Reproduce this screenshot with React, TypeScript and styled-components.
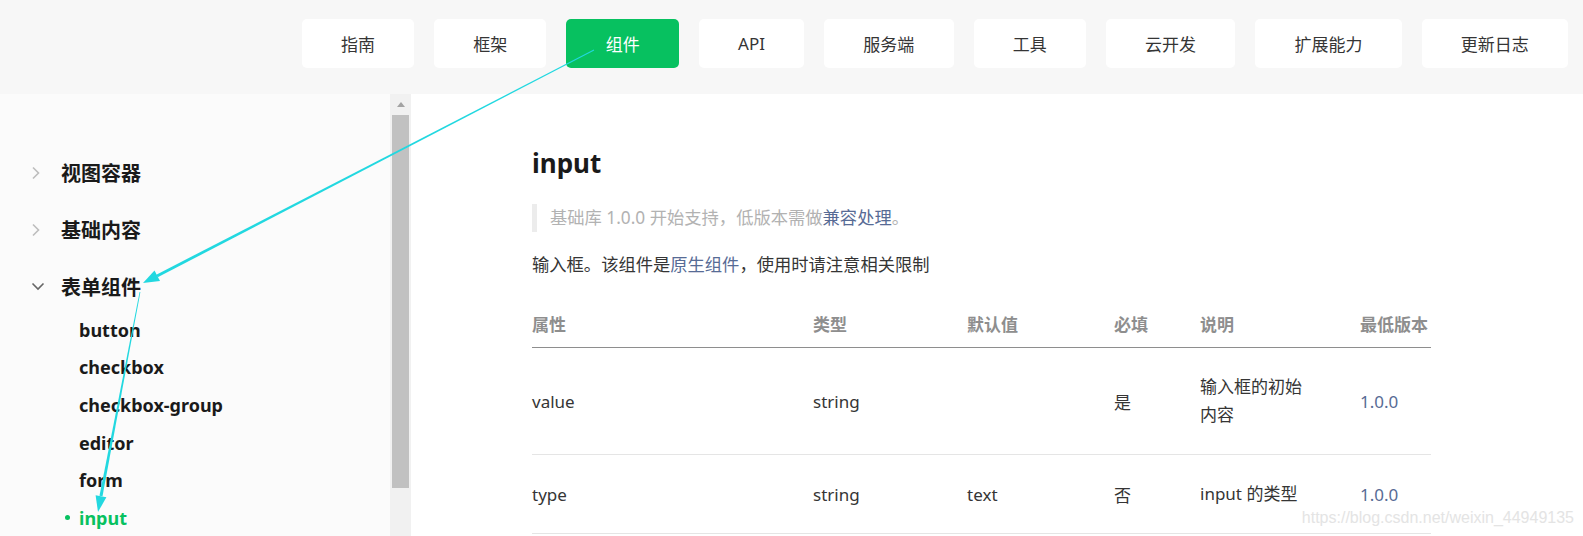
import React from 'react'
import styled, { createGlobalStyle } from 'styled-components'

const GlobalStyle = createGlobalStyle`
  html, body {
    margin: 0;
    padding: 0;
    background: #fff;
  }
  body {
    font-family: "Noto Sans", "Noto Sans CJK SC", sans-serif;
    color: #353535;
    overflow: hidden;
  }
`

const navItems = ['指南', '框架', '组件', 'API', '服务端', '工具', '云开发', '扩展能力', '更新日志']

const groups = [
  { title: '视图容器', open: false },
  { title: '基础内容', open: false },
  { title: '表单组件', open: true },
]

const subItems = ['button', 'checkbox', 'checkbox-group', 'editor', 'form', 'input']

const rows = [
  { name: 'value', type: 'string', def: '', req: '是', desc: '输入框的初始内容', ver: '1.0.0', tall: true },
  { name: 'type', type: 'string', def: 'text', req: '否', desc: 'input 的类型', ver: '1.0.0', tall: false },
]

const ChevronRight = () => (
  <svg width="9" height="14" viewBox="0 0 9 14">
    <path d="M2 1.5 L7.5 7 L2 12.5" fill="none" stroke="#bdbdbd" strokeWidth="1.6" />
  </svg>
)

const ChevronDown = () => (
  <svg width="14" height="9" viewBox="0 0 14 9">
    <path d="M1.5 1.5 L7 7 L12.5 1.5" fill="none" stroke="#666" strokeWidth="1.6" />
  </svg>
)

const App = () => {
  return (
    <Page>
      <GlobalStyle />
      <TopBar>
        {navItems.map((item) => (
          <NavButton key={item} active={item === '组件'}>
            {item}
          </NavButton>
        ))}
      </TopBar>

      <Body>
        <Sidebar>
          {groups.map((g) => (
            <div key={g.title}>
              <GroupHead>
                <ChevronBox>{g.open ? <ChevronDown /> : <ChevronRight />}</ChevronBox>
                {g.title}
              </GroupHead>
              {g.open && (
                <SubList>
                  {subItems.map((s) => (
                    <SubItem key={s} current={s === 'input'}>
                      {s}
                    </SubItem>
                  ))}
                </SubList>
              )}
            </div>
          ))}
        </Sidebar>

        <ScrollTrack>
          <ScrollArrow />
          <ScrollThumb />
        </ScrollTrack>

        <Content>
          <Title>input</Title>
          <Quote>
            基础库 1.0.0 开始支持，低版本需做<Link>兼容处理</Link>。
          </Quote>
          <Para>
            输入框。该组件是<Link>原生组件</Link>，使用时请注意相关限制
          </Para>
          <Table>
            <HeadRow>
              <HeadCell>属性</HeadCell>
              <HeadCell>类型</HeadCell>
              <HeadCell>默认值</HeadCell>
              <HeadCell>必填</HeadCell>
              <HeadCell>说明</HeadCell>
              <HeadCell>最低版本</HeadCell>
            </HeadRow>
            {rows.map((r) => (
              <BodyRow key={r.name} tall={r.tall}>
                <Cell>{r.name}</Cell>
                <Cell>{r.type}</Cell>
                <Cell>{r.def}</Cell>
                <Cell>{r.req}</Cell>
                <DescCell>{r.desc}</DescCell>
                <VersionCell>{r.ver}</VersionCell>
              </BodyRow>
            ))}
          </Table>
        </Content>
      </Body>

      {/* annotation arrows drawn over the page */}
      <Annotations width="1583" height="536" viewBox="0 0 1583 536">
        <polygon points="594.2,50.4 157.7,277.3 156.3,274.7 593.8,49.6" fill="#22d8e0" />
        <polygon points="143,283 160,281 154.5,270.4" fill="#22d8e0" />
        <polygon points="140.4,292.1 102.5,496.3 99.5,495.7 139.6,291.9" fill="#22d8e0" />
        <polygon points="98,512 106.4,497.3 95.6,495.3" fill="#22d8e0" />
      </Annotations>

      <Watermark>https://blog.csdn.net/weixin_44949135</Watermark>
    </Page>
  )
}

export default App

const Page = styled.div`
  position: relative;
  width: 1583px;
  height: 536px;
  overflow: hidden;
  display: flex;
  flex-direction: column;
`

const TopBar = styled.div`
  height: 94px;
  flex-shrink: 0;
  box-sizing: border-box;
  padding: 19px 15px 0 0;
  background: #f7f7f7;
  display: flex;
  justify-content: flex-end;
  align-items: flex-start;
  gap: 20px;
`

const NavButton = styled.div<{ active?: boolean }>`
  height: 49px;
  padding: 0 39.2px;
  border-radius: 5px;
  display: flex;
  align-items: center;
  justify-content: center;
  font-size: 17px;
  background: ${(p) => (p.active ? '#07c160' : '#fff')};
  color: ${(p) => (p.active ? '#fff' : '#353535')};
`

const Body = styled.div`
  flex: 1;
  display: flex;
  min-height: 0;
`

const Sidebar = styled.div`
  width: 390px;
  flex-shrink: 0;
  box-sizing: border-box;
  padding-top: 50px;
  background: #fbfbfb;
`

const GroupHead = styled.div`
  height: 57px;
  display: flex;
  align-items: center;
  font-size: 20px;
  font-weight: 700;
  color: #1a1a1a;
`

const ChevronBox = styled.span`
  width: 61px;
  padding-left: 31px;
  box-sizing: border-box;
  display: flex;
  align-items: center;
`

const SubList = styled.div`
  margin-top: -4px;
  padding-left: 79px;
`

const SubItem = styled.div<{ current?: boolean }>`
  position: relative;
  height: 37.6px;
  display: flex;
  align-items: center;
  font-size: 18px;
  font-weight: 700;
  color: ${(p) => (p.current ? '#07c160' : '#1a1a1a')};

  &::before {
    content: '';
    display: ${(p) => (p.current ? 'block' : 'none')};
    position: absolute;
    left: -14px;
    top: 16px;
    width: 5px;
    height: 5px;
    border-radius: 50%;
    background: #07c160;
  }
`

const ScrollTrack = styled.div`
  width: 21px;
  flex-shrink: 0;
  background: #f1f1f1;
  display: flex;
  flex-direction: column;
  align-items: center;
`

const ScrollArrow = styled.div`
  margin-top: 8px;
  width: 0;
  height: 0;
  border-left: 4px solid transparent;
  border-right: 4px solid transparent;
  border-bottom: 5px solid #a3a3a3;
`

const ScrollThumb = styled.div`
  margin-top: 8px;
  width: 17px;
  height: 373px;
  background: #c1c1c1;
`

const Content = styled.div`
  flex: 1;
  background: #fff;
  box-sizing: border-box;
  padding: 51px 0 0 121px;
`

const Title = styled.h1`
  margin: 0;
  font-size: 26px;
  line-height: 36px;
  font-weight: 700;
  color: #1a1a1a;
`

const Quote = styled.div`
  margin-top: 23px;
  height: 28px;
  line-height: 28px;
  border-left: 5px solid #ececec;
  padding-left: 13px;
  font-size: 17.3px;
  color: #b2b2b2;
`

const Link = styled.span`
  color: #576b95;
`

const Para = styled.p`
  margin: 19px 0 0;
  line-height: 28px;
  font-size: 17.3px;
  color: #353535;
`

const columns = '281px 154px 147px 86px 160px 71px'

const Table = styled.div`
  margin-top: 20px;
  width: 899px;
`

const HeadRow = styled.div`
  display: grid;
  grid-template-columns: ${columns};
  height: 48px;
  align-items: center;
  border-bottom: 1px solid #8e8e8e;
`

const HeadCell = styled.div`
  font-size: 17px;
  font-weight: 700;
  color: #8e8e8e;
  white-space: nowrap;
`

const BodyRow = styled.div<{ tall?: boolean }>`
  display: grid;
  grid-template-columns: ${columns};
  height: ${(p) => (p.tall ? '106px' : '78px')};
  align-items: center;
  border-bottom: 1px solid #e5e5e5;
`

const Cell = styled.div`
  font-size: 17px;
  color: #353535;
`

const DescCell = styled(Cell)`
  max-width: 104px;
  line-height: 28px;
`

const VersionCell = styled(Cell)`
  color: #576b95;
`

const Annotations = styled.svg`
  position: absolute;
  left: 0;
  top: 0;
  pointer-events: none;
`

const Watermark = styled.div`
  position: absolute;
  right: 9px;
  top: 507px;
  font-family: "Liberation Sans", Arial, sans-serif;
  font-size: 16px;
  line-height: 22px;
  color: #e4e4e4;
`
